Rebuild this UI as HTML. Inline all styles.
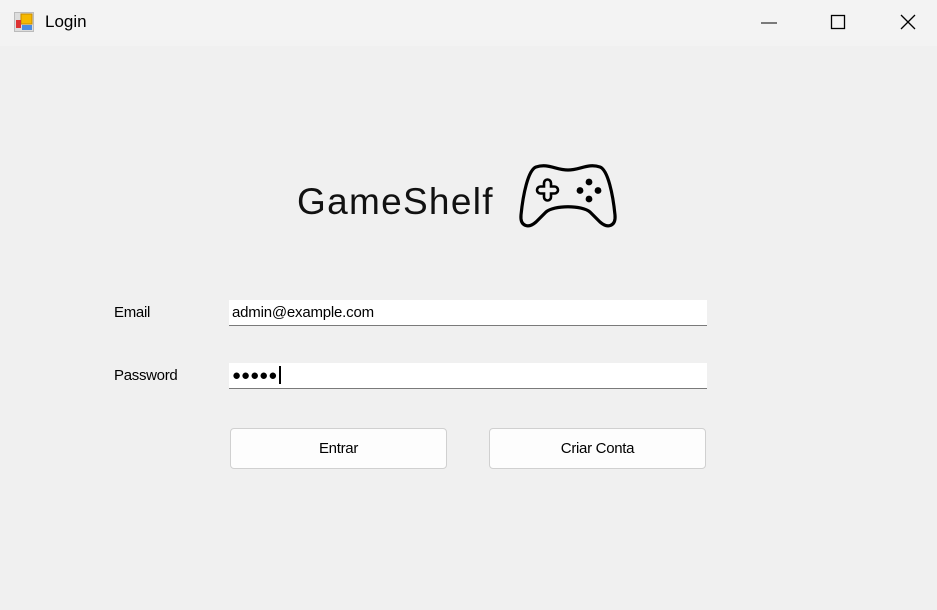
<!DOCTYPE html>
<html><head><style>
body{margin:0;width:937px;height:610px;background:#f0f0f0;font-family:"Liberation Sans",sans-serif;position:relative;overflow:hidden}
.title{position:absolute;left:0;top:0;width:937px;height:46px;background:#f3f3f3}
.t{position:absolute;left:45px;top:12px;font-size:17px;color:#000}
.lbl{position:absolute;left:114px;font-size:15px;color:#000;letter-spacing:-0.3px}
.in{position:absolute;left:229px;width:478px;height:26px;background:#fff;border-bottom:1px solid #7a7a7a;font-size:15px;box-sizing:border-box;padding:4px 0 0 3px;letter-spacing:-0.2px}
.btn{position:absolute;top:428px;height:41px;width:217px;background:#fdfdfd;border:1px solid #d0d0d0;border-radius:4px;box-sizing:border-box;text-align:center;line-height:40px;font-size:15px;letter-spacing:-0.3px}
</style></head><body>
<div class="title"></div>
<svg style="position:absolute;left:14px;top:12px" width="20" height="20">
<rect x="0.5" y="0.5" width="19" height="19" fill="#ddd" stroke="#bbb"/>
<rect x="7" y="2" width="11" height="10" fill="#f5b800" stroke="#c88a00"/>
<rect x="2" y="8" width="5" height="8" fill="#d33" />
<rect x="8" y="13" width="10" height="5" fill="#4a8be0"/>
</svg>
<div class="t">Login</div>
<svg style="position:absolute;left:760px;top:12px" width="170" height="22">
<line x1="1" y1="11" x2="17" y2="11" stroke="#000" stroke-width="1"/>
<rect x="71.5" y="3.5" width="13" height="13" fill="none" stroke="#000" stroke-width="1.3"/>
<path d="M141 3 L155 17 M155 3 L141 17" stroke="#000" stroke-width="1.3"/>
</svg>
<div style="position:absolute;left:297px;top:181px;font-size:37px;color:#111;letter-spacing:1.3px">GameShelf</div>
<svg style="position:absolute;left:0;top:0" width="937" height="610">
<path d="M536,167 C548,163 556,170 568,170 C580,170 588,163 600,167 C608,170 613,195 615,215 C616,226 608,229 600,222 L590,212 C582,205 554,205 546,212 L536,222 C528,229 520,226 521,215 C523,195 528,170 536,167 Z" fill="none" stroke="#000" stroke-width="3.2" stroke-linejoin="round"/>
<path d="M544,183 a3.5,3.5 0 0 1 7,0 v3.5 h3.5 a3.5,3.5 0 0 1 0,7 h-3.5 v3.5 a3.5,3.5 0 0 1 -7,0 v-3.5 h-3.5 a3.5,3.5 0 0 1 0,-7 h3.5 z" fill="none" stroke="#000" stroke-width="2.6"/>
<circle cx="589" cy="182" r="3.4"/><circle cx="580" cy="190.5" r="3.4"/><circle cx="598" cy="190.5" r="3.4"/><circle cx="589" cy="199" r="3.4"/>
</svg>
<div class="lbl" style="top:304px">Email</div>
<div class="lbl" style="top:367px">Password</div>
<div class="in" style="top:300px">admin@example.com</div>
<div class="in" style="top:363px;font-size:15px;padding-top:3px;letter-spacing:0">●●●●●<span style="display:inline-block;width:1.5px;height:18px;background:#000;vertical-align:-4px;margin-left:2px"></span></div>
<div class="btn" style="left:230px">Entrar</div>
<div class="btn" style="left:489px">Criar Conta</div>
</body></html>
